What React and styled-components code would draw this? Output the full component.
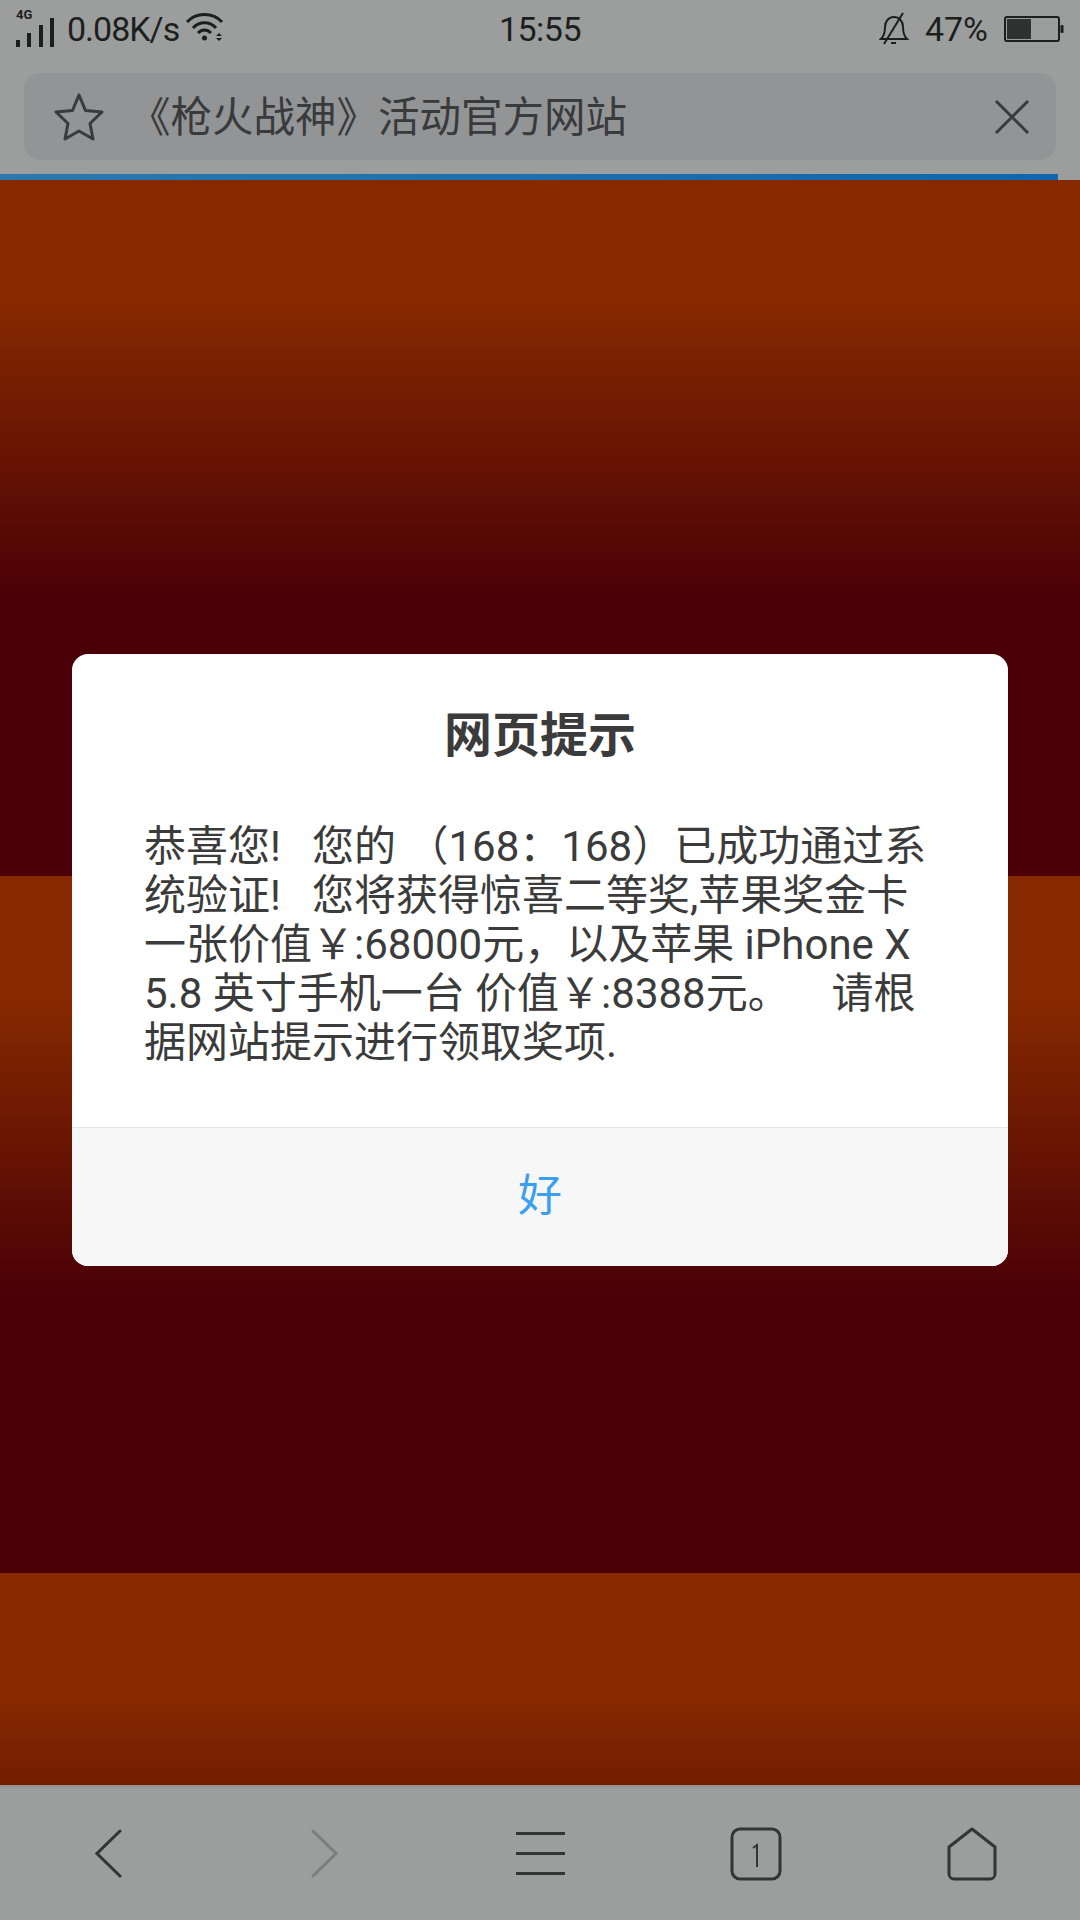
import React from 'react';
import styled, { createGlobalStyle } from 'styled-components';

const FONT = '"Roboto", "Noto Sans CJK SC", sans-serif';

const GlobalStyle = createGlobalStyle`
    html, body {
        margin: 0;
        padding: 0;
        background: #9c9e9d;
        font-family: ${FONT};
    }
`;

const Screen = styled.div`
    position: relative;
    width: 1080px;
    height: 1920px;
    display: flex;
    flex-direction: column;
    overflow: hidden;
    background: #9c9e9d;
`;

const StatusBar = styled.div`
    height: 58px;
    padding: 0 16px;
    display: grid;
    grid-template-columns: 1fr auto 1fr;
    align-items: center;
    color: #1d1f1f;
    font-size: 34px;
`;

const StatusGroup = styled.div`
    display: flex;
    align-items: center;
    gap: ${props => props.$gap || 8}px;
    justify-content: ${props => props.$end ? 'flex-end' : 'flex-start'};
`;

const SpeedText = styled.span`
    margin-left: 7px;
    letter-spacing: -1px;
`;

const ClockText = styled.span`
    letter-spacing: -0.5px;
`;

const AddressWrap = styled.div`
    padding: 15px 24px 14px;
`;

const AddressBar = styled.div`
    height: 87px;
    box-sizing: border-box;
    padding: 0 26px 0 30px;
    display: flex;
    align-items: center;
    gap: 25px;
    background: #929496;
    border-radius: 16px;
    color: #383a3b;
`;

const PageTitle = styled.div`
    flex: 1;
    font-size: 41.5px;
    line-height: 48px;
    padding-top: 2px;
`;

const ProgressTrack = styled.div`
    height: 6px;
`;

const ProgressBar = styled.div`
    width: 1058px;
    height: 100%;
    background: linear-gradient(90deg, #2a78ad, #0f66ae);
`;

const Page = styled.div`
    flex: 1;
    background: linear-gradient(#862900 0, #862900 18%, #4a0006 60%, #4a0006 100%) 0 -1px / 100% 697px repeat-y;
`;

const Toolbar = styled.div`
    height: 135px;
    box-sizing: border-box;
    border-top: 2px solid #96918f;
    display: grid;
    grid-template-columns: repeat(5, 1fr);
    align-items: center;
    justify-items: center;
    color: #333535;
`;

const Modal = styled.div`
    position: absolute;
    left: 72px;
    top: 654px;
    width: 936px;
    height: 612px;
    display: flex;
    flex-direction: column;
    background: #fff;
    border-radius: 16px;
    overflow: hidden;
`;

const ModalBody = styled.div`
    flex: 1;
    padding: 0 72px;
    color: #3b3b3b;
`;

const ModalTitle = styled.h2`
    margin: 0;
    padding: 53px 0 57px;
    text-align: center;
    font-size: 48px;
    line-height: 58px;
    font-weight: 700;
`;

const MessageLine = styled.div`
    font-size: 42px;
    line-height: 49px;
    white-space: pre;
`;

const ModalFooter = styled.div`
    height: 138px;
    box-sizing: content-box;
    display: flex;
    align-items: center;
    justify-content: center;
    background: #f7f7f7;
    border-top: 1px solid #e6e6e6;
    color: #3b9fee;
`;

const OkLabel = styled.span`
    font-size: 44px;
    line-height: 54px;
    padding-bottom: 2px;
`;

const lines = [
    '恭喜您!   您的 （168：168）已成功通过系',
    '统验证!   您将获得惊喜二等奖,苹果奖金卡',
    '一张价值￥:68000元，以及苹果 iPhone X',
    '5.8 英寸手机一台 价值￥:8388元。    请根',
    '据网站提示进行领取奖项.',
];

const SignalIcon = () => (
    <svg width="38" height="44" viewBox="0 0 38 44" fill="currentColor">
        <rect x="0" y="33" width="4" height="7" />
        <rect x="11" y="26" width="4" height="14" />
        <rect x="23" y="18" width="4" height="22" />
        <rect x="34" y="11" width="4" height="29" />
        <text x="0" y="12" fontSize="13" fontWeight="700" fontFamily="Roboto, sans-serif">4G</text>
    </svg>
);

const WifiIcon = () => (
    <svg width="40" height="34" viewBox="0 0 40 34" fill="none" stroke="currentColor" strokeWidth="3">
        <path d="M2 10C11 0 28 0 37 10" />
        <path d="M8 16C14 9 25 9 31 16" />
        <path d="M13 21C17 17 22 17 26 21" />
        <circle cx="19.500" cy="26" r="2.500" fill="currentColor" stroke="none" />
        <path d="M31 24l3-3 3 3zM31 26l3 3 3-3z" fill="currentColor" stroke="none" />
    </svg>
);

const BellOffIcon = () => (
    <svg width="30" height="34" viewBox="0 0 30 34" fill="none" stroke="currentColor" strokeWidth="2">
        <path d="M2 27c3-3 4-6 4-12 0-6 4-10 9-10s9 4 9 10c0 6 1 9 4 12z" />
        <path d="M5 32L24 1" />
        <path d="M12 31h5" />
    </svg>
);

const BatteryIcon = () => (
    <svg width="60" height="28" viewBox="0 0 60 28" fill="none">
        <rect x="1" y="2" width="54" height="24" rx="2" stroke="currentColor" strokeWidth="2" />
        <rect x="3" y="4" width="24" height="20" fill="#2f3030" />
        <rect x="56.500" y="10" width="3" height="8" rx="1" fill="currentColor" />
    </svg>
);

const StarIcon = () => (
    <svg width="50" height="50" viewBox="0 0 50 50" fill="none" stroke="currentColor" strokeWidth="3" strokeLinejoin="round">
        <path d="M25 3l6.500 15.500L48 20 36 31.500 39 47 25 39 11 47l3-15.500L2 20l16.500-1.500z" />
    </svg>
);

const CloseIcon = () => (
    <svg width="36" height="36" viewBox="0 0 36 36" stroke="currentColor" strokeWidth="3">
        <path d="M2 2l32 32M34 2L2 34" />
    </svg>
);

const BackIcon = () => (
    <svg width="27" height="49" viewBox="0 0 27 49" fill="none" stroke="currentColor" strokeWidth="3" strokeLinecap="round">
        <path d="M25 2L2 24.500 25 47" />
    </svg>
);

const ForwardIcon = () => (
    <svg width="27" height="49" viewBox="0 0 27 49" fill="none" stroke="#7c7e7e" strokeWidth="3" strokeLinecap="round">
        <path d="M2 2l23 22.500L2 47" />
    </svg>
);

const MenuIcon = () => (
    <svg width="49" height="43" viewBox="0 0 49 43" fill="currentColor">
        <rect x="0" y="0" width="49" height="3" />
        <rect x="0" y="20" width="49" height="3" />
        <rect x="0" y="40" width="49" height="3" />
    </svg>
);

const TabsIcon = () => (
    <svg width="52" height="54" viewBox="0 0 52 54" fill="none" stroke="currentColor" strokeWidth="3">
        <rect x="2" y="2" width="48" height="50" rx="8" />
        <path d="M23 21l4-3v22" strokeWidth="2" />
    </svg>
);

const HomeIcon = () => (
    <svg width="50" height="54" viewBox="0 0 50 54" fill="none" stroke="currentColor" strokeWidth="3" strokeLinejoin="round">
        <path d="M25 2L48 20v27a5 5 0 0 1-5 5H7a5 5 0 0 1-5-5V20z" />
    </svg>
);

export default function App() {
    return (
        <Screen>
            <GlobalStyle />
            <StatusBar>
                <StatusGroup $gap={6}>
                    <SignalIcon />
                    <SpeedText>0.08K/s</SpeedText>
                    <WifiIcon />
                </StatusGroup>
                <ClockText>15:55</ClockText>
                <StatusGroup $end $gap={16}>
                    <BellOffIcon />
                    <span>47%</span>
                    <BatteryIcon />
                </StatusGroup>
            </StatusBar>
            <AddressWrap>
                <AddressBar>
                    <StarIcon />
                    <PageTitle>《枪火战神》活动官方网站</PageTitle>
                    <CloseIcon />
                </AddressBar>
            </AddressWrap>
            <ProgressTrack>
                <ProgressBar />
            </ProgressTrack>
            <Page />
            <Toolbar>
                <BackIcon />
                <ForwardIcon />
                <MenuIcon />
                <TabsIcon />
                <HomeIcon />
            </Toolbar>
            <Modal>
                <ModalBody>
                    <ModalTitle>网页提示</ModalTitle>
                    {lines.map((line, i) => <MessageLine key={i}>{line}</MessageLine>)}
                </ModalBody>
                <ModalFooter>
                    <OkLabel>好</OkLabel>
                </ModalFooter>
            </Modal>
        </Screen>
    );
}
